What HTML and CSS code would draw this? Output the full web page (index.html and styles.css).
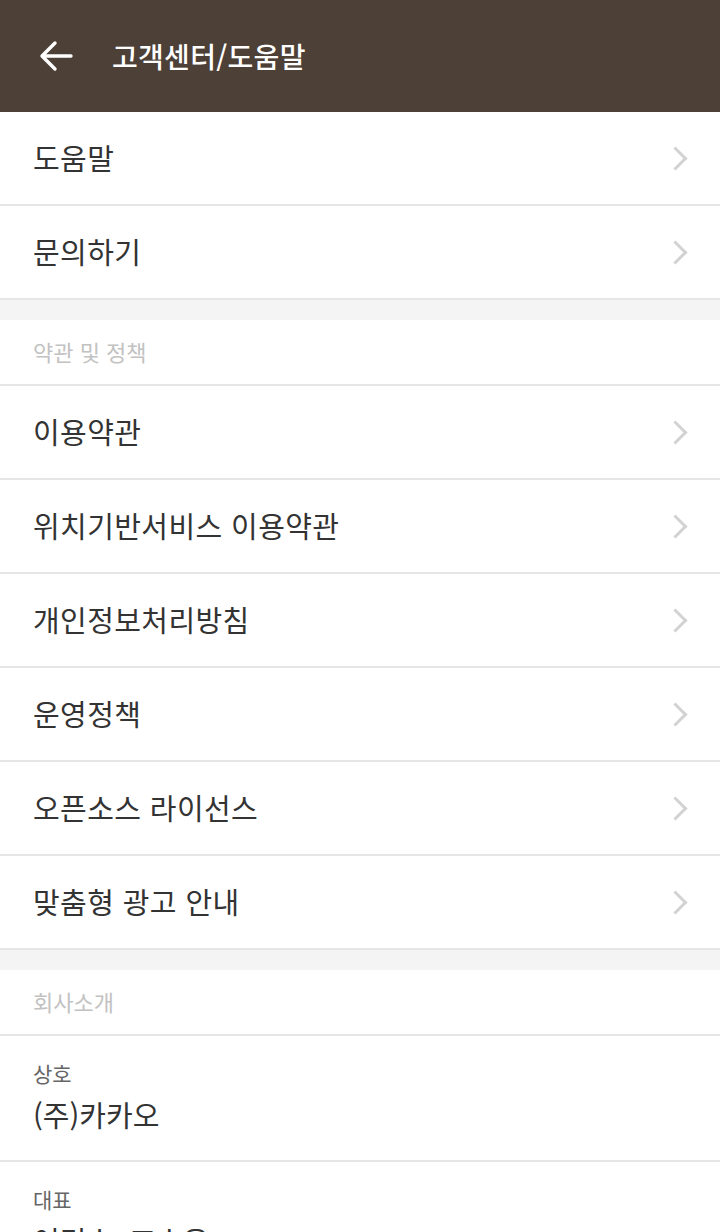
FILE: index.html
```html
<!DOCTYPE html>
<html lang="ko">
<head>
<meta charset="utf-8">
<title>고객센터/도움말</title>
<link rel="stylesheet" href="styles.css">
</head>
<body>
<header class="appbar">
  <svg class="back" width="34" height="32" viewBox="0 0 34 32" aria-hidden="true">
    <path d="M32 16H4M16 3L3 16L16 29" fill="none" stroke="#fff" stroke-width="3.4" stroke-linecap="round" stroke-linejoin="round"/>
  </svg>
  <h1 class="title">고객센터/도움말</h1>
</header>
<main>
  <ul class="group">
    <li class="item"><span>도움말</span><i class="chev"></i></li>
    <li class="item"><span>문의하기</span><i class="chev"></i></li>
  </ul>
  <div class="spacer"></div>
  <div class="section-head">약관 및 정책</div>
  <ul class="group">
    <li class="item"><span>이용약관</span><i class="chev"></i></li>
    <li class="item"><span>위치기반서비스 이용약관</span><i class="chev"></i></li>
    <li class="item"><span>개인정보처리방침</span><i class="chev"></i></li>
    <li class="item"><span>운영정책</span><i class="chev"></i></li>
    <li class="item"><span>오픈소스 라이선스</span><i class="chev"></i></li>
    <li class="item"><span>맞춤형 광고 안내</span><i class="chev"></i></li>
  </ul>
  <div class="spacer"></div>
  <div class="section-head">회사소개</div>
  <ul class="group">
    <li class="info"><span class="label">상호</span><span class="value">(주)카카오</span></li>
    <li class="info"><span class="label">대표</span><span class="value">여민수, 조수용</span></li>
  </ul>
</main>
</body>
</html>
```

FILE: styles.css
```css
html, body {
  margin: 0;
  padding: 0;
  background: #fff;
  font-family: "Noto Sans CJK KR", "Noto Sans", sans-serif;
}
.appbar {
  height: 112px;
  background: #4d4037;
  display: flex;
  align-items: center;
  padding-left: 39px;
  box-sizing: border-box;
}
.back {
  display: block;
  margin-right: 39px;
}
.title {
  margin: 0;
  color: #fff;
  font-size: 28px;
  font-weight: 500;
  letter-spacing: 0.3px;
}
.group {
  list-style: none;
  margin: 0;
  padding: 0;
}
.item {
  height: 92px;
  border-bottom: 2px solid #e6e6e6;
  display: flex;
  align-items: center;
  justify-content: space-between;
  padding: 0 36px 0 33px;
  font-size: 29px;
  letter-spacing: 0.4px;
  color: #333;
}
.item span {
  margin-top: -2px;
}
.chev {
  width: 14px;
  height: 14px;
  border-top: 3.5px solid #d2d2d2;
  border-right: 3.5px solid #d2d2d2;
  transform: rotate(45deg);
}
.spacer {
  height: 20px;
  background: #f4f4f4;
}
.section-head {
  height: 64px;
  border-bottom: 2px solid #e6e6e6;
  display: flex;
  align-items: center;
  padding: 0 33px 2px;
  box-sizing: border-box;
  height: 66px;
  font-size: 22px;
  color: #c2c2c2;
}
.info {
  display: flex;
  flex-direction: column;
  gap: 5px;
  padding: 22px 33px 25px;
  border-bottom: 2px solid #e6e6e6;
}
.label {
  font-size: 21px;
  line-height: 30px;
  color: #666;
}
.value {
  font-size: 29px;
  line-height: 42px;
  color: #333;
}
```
